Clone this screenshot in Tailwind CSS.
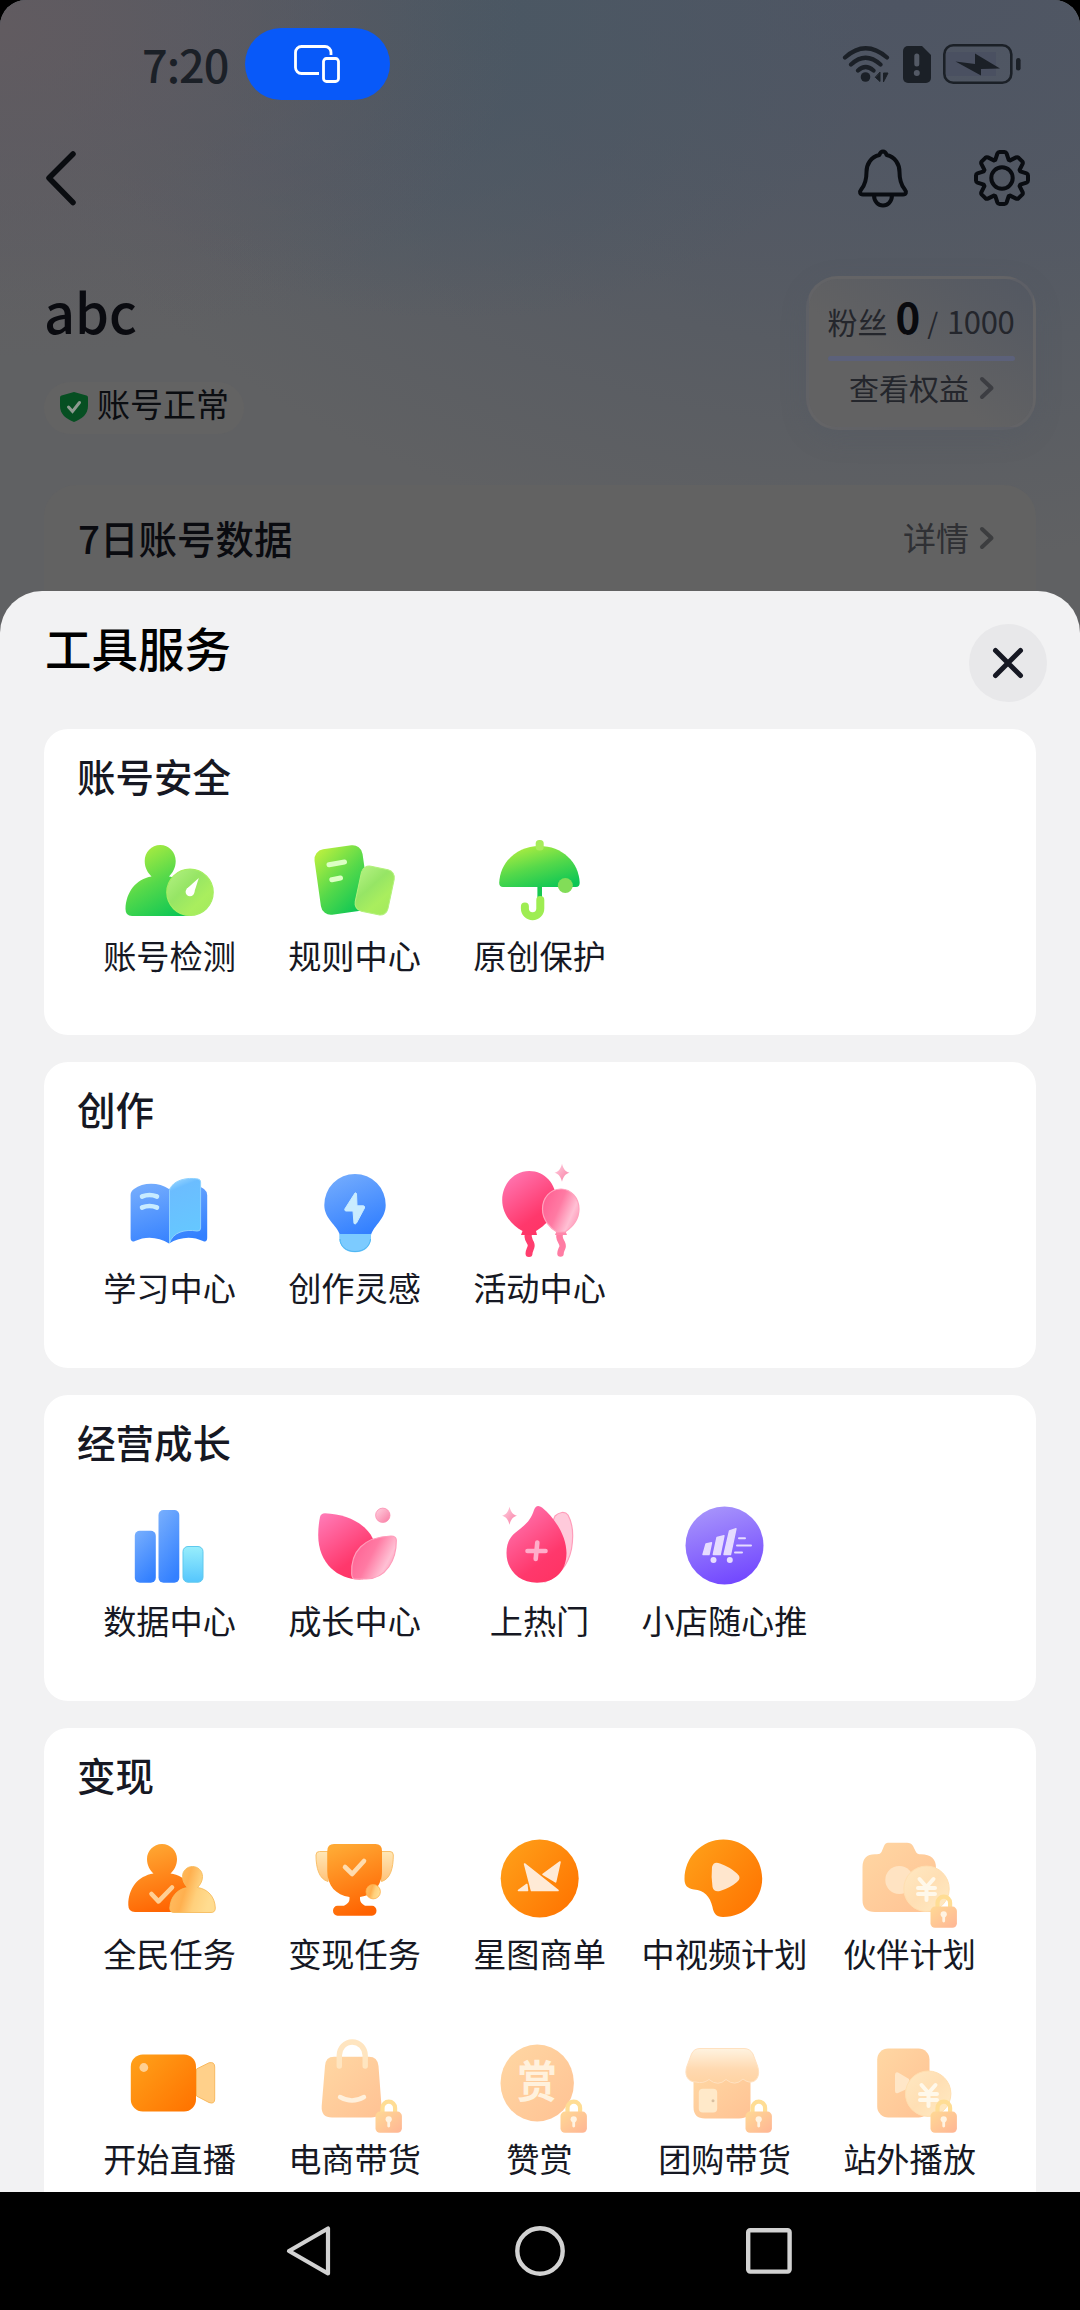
<!DOCTYPE html>
<html lang="zh-CN">
<head>
<meta charset="utf-8">
<title>工具服务</title>
<script src="https://cdn.jsdelivr.net/npm/@tailwindcss/browser@4"></script>
</head>
<body class="bg-black">
<svg class="absolute h-0 w-0" aria-hidden="true">
  <defs>
    <linearGradient id="green" x1="0.2" y1="0" x2="0.75" y2="1"><stop offset="0" stop-color="#b4ee40"/><stop offset="0.5" stop-color="#56d94a"/><stop offset="1" stop-color="#0cc655"/></linearGradient>
    <linearGradient id="lime" x1="0" y1="0" x2="1" y2="1"><stop offset="0" stop-color="#b5f283"/><stop offset="0.4" stop-color="#96e565"/><stop offset="0.7" stop-color="#a9ee5e"/><stop offset="1" stop-color="#a3ea5c"/></linearGradient>
    <linearGradient id="blue" x1="0.2" y1="0" x2="0.6" y2="1"><stop offset="0" stop-color="#74acfd"/><stop offset="1" stop-color="#3380ff"/></linearGradient>
    <linearGradient id="sky" x1="0" y1="0" x2="0.2" y2="1"><stop offset="0" stop-color="#a6dcff"/><stop offset="0.2" stop-color="#6bbdff"/><stop offset="1" stop-color="#65c8ff"/></linearGradient>
    <linearGradient id="aqua" x1="0" y1="0" x2="0" y2="1"><stop offset="0" stop-color="#98eefc"/><stop offset="1" stop-color="#55c6fd"/></linearGradient>
    <linearGradient id="pink" x1="0.1" y1="0" x2="0.7" y2="1"><stop offset="0" stop-color="#ff7ab6"/><stop offset="0.75" stop-color="#ff386c"/><stop offset="1" stop-color="#ff3465"/></linearGradient>
    <linearGradient id="rose" x1="0" y1="0.2" x2="1" y2="0.7"><stop offset="0" stop-color="#ff5f92"/><stop offset="0.45" stop-color="#ff7aa3"/><stop offset="0.8" stop-color="#ffc0d4"/><stop offset="1" stop-color="#ff9cbb"/></linearGradient>
    <linearGradient id="petal" x1="0" y1="0" x2="1" y2="1"><stop offset="0" stop-color="#ffd3e1"/><stop offset="1" stop-color="#f97ba3"/></linearGradient>
    <linearGradient id="violet" x1="0.3" y1="0" x2="0.6" y2="1"><stop offset="0" stop-color="#a794fb"/><stop offset="1" stop-color="#7247ff"/></linearGradient>
    <linearGradient id="orange" x1="0" y1="0.1" x2="1" y2="0.9"><stop offset="0" stop-color="#ffa019"/><stop offset="1" stop-color="#ff7300"/></linearGradient>
    <linearGradient id="flame" x1="0.3" y1="0" x2="0.6" y2="1"><stop offset="0" stop-color="#ffa934"/><stop offset="1" stop-color="#ff6200"/></linearGradient>
    <linearGradient id="amber" x1="0" y1="0" x2="1" y2="0.3"><stop offset="0" stop-color="#ffc26a"/><stop offset="0.45" stop-color="#ffb04f"/><stop offset="0.7" stop-color="#ffd07c"/><stop offset="1" stop-color="#ffdc90"/></linearGradient>
    <linearGradient id="cream" x1="0" y1="0" x2="0" y2="1"><stop offset="0" stop-color="#ffe7b6"/><stop offset="1" stop-color="#ffc27a"/></linearGradient>
    <linearGradient id="peach" x1="0" y1="0" x2="1" y2="1"><stop offset="0" stop-color="#ffd7a3"/><stop offset="1" stop-color="#ffc294"/></linearGradient>
    <linearGradient id="coin" x1="0" y1="0" x2="1" y2="1"><stop offset="0" stop-color="#ffe8c2"/><stop offset="0.5" stop-color="#ffdfb4"/><stop offset="1" stop-color="#ffebc4"/></linearGradient>
    <linearGradient id="awning" x1="0" y1="0" x2="0" y2="1"><stop offset="0" stop-color="#fff3e0"/><stop offset="0.6" stop-color="#ffd9b0"/><stop offset="1" stop-color="#ffd3a3"/></linearGradient>
    <linearGradient id="lockfill" x1="0" y1="0" x2="1" y2="1"><stop offset="0" stop-color="#ffd995"/><stop offset="1" stop-color="#ffb595"/></linearGradient>
    <g id="lock">
      <path d="M78.500 81V75a6.300 6.300 0 0 1 12.600 0V81" fill="none" stroke="#ffdd94" stroke-width="4.200"/>
      <rect x="71.500" y="78.600" width="26.400" height="21.200" rx="4.500" fill="url(#lockfill)"/>
      <circle cx="84.700" cy="86.300" r="3.100" fill="#fff3e2"/>
      <path d="M84.700 87V93" stroke="#fff3e2" stroke-width="2.800" stroke-linecap="round"/>
    </g>
    <path id="yen" d="M-7 -9L0 -1L7 -9M-8.500 0H8.500M-8.500 6H8.500M0 -1V12" fill="none" stroke="#fff8ea" stroke-width="4" stroke-linecap="round" stroke-linejoin="round"/>
    <path id="spark" d="M0 -9C1.500 -3.500 3 -1.500 7.500 0C3 1.500 1.500 3.500 0 9C-1.500 3.500 -3 1.500 -7.500 0C-3 -1.500 -1.500 -3.500 0 -9Z" fill="url(#petal)"/>
  </defs>
</svg>

<main class="flex h-[2310px] w-[1080px] flex-col overflow-hidden rounded-t-[26px] bg-[#626262] font-['Noto_Sans_CJK_SC','Noto_Sans',sans-serif] text-[#161823]">

  <!-- dimmed page behind the sheet -->
  <header class="h-[633px] shrink-0 bg-[radial-gradient(ellipse_520px_330px_at_0px_30px,#615b60_0%,#615b6000_100%),radial-gradient(ellipse_420px_300px_at_460px_20px,#4a5763_0%,#4a576300_100%),radial-gradient(ellipse_900px_560px_at_900px_0px,#4e5563_0%,#50576399_55%,#50576300_100%),linear-gradient(180deg,#545a64_0%,#606163_50%,#606163_100%)]">
    <div class="flex h-[128px] items-center pl-[142px] pr-[58px]">
      <span class="-mt-[2px] w-[103px] text-[45px] font-medium leading-none tracking-[-1px] text-[#1b2027]">7:20</span>
      <div class="flex h-[72px] w-[145px] items-center justify-center rounded-full bg-[#0859f9]">
        <svg class="h-[40px] w-[48px] -translate-x-px -translate-y-px" viewBox="0 0 48 40" fill="none" stroke="#fff" stroke-width="2.800"><path d="M26 30.500H8.500a6 6 0 0 1-6-6V9.500a6 6 0 0 1 6-6H32a6 6 0 0 1 6 6V12"/><rect x="30.500" y="15.500" width="15" height="23" rx="3"/></svg>
      </div>
      <div class="ml-auto flex items-center">
        <svg class="h-[40px] w-[48px]" viewBox="0 0 48 40" fill="none" stroke="#1b2027" stroke-width="4.200" stroke-linecap="round"><path d="M3 13.500Q23.500-5 45 13.500M9 20.500Q23.500 7 38.500 20.500M16 26.500Q23.500 19.500 31.500 26.500"/><circle cx="23.500" cy="33" r="4.800" fill="#1b2027" stroke="none"/><path d="M38 28.500V37.500L33.500 33.500ZM41.500 37.500V29H46L42.500 36Z" fill="#1b2027" stroke="#1b2027" stroke-width="1"/></svg>
        <svg class="ml-[13px] h-[37px] w-[28px]" viewBox="0 0 28 37"><path d="M5 0H19L28 9V32a5 5 0 0 1-5 5H5a5 5 0 0 1-5-5V5a5 5 0 0 1 5-5Z" fill="#1b2027"/><path d="M13.800 10V18" stroke="#545a66" stroke-width="5" stroke-linecap="round"/><circle cx="13.800" cy="27" r="3" fill="#545a66"/></svg>
        <svg class="ml-[12px] h-[40px] w-[79px]" viewBox="0 0 79 40"><path d="M3 8h50v24H3z" fill="#4a5061"/><rect x="1.300" y="1.300" width="67" height="37.400" rx="9" fill="none" stroke="#1b2027" stroke-width="2.600"/><path d="M12.500 17.500L32 20V9.500L57 24.500L38 25V31.500Z" fill="#1b2027"/><rect x="73" y="14" width="4.600" height="12.500" rx="2.300" fill="#1b2027"/></svg>
      </div>
    </div>

    <div class="flex h-[100px] items-center pl-[44px] pr-[48px]">
      <svg class="h-[58px] w-[36px]" viewBox="0 0 36 58" fill="none" stroke="#0a0c10" stroke-width="5.500" stroke-linecap="round" stroke-linejoin="round"><path d="M29 5L5 29L29 53.500"/></svg>
      <svg class="ml-auto h-[60px] w-[52px]" viewBox="0 0 52 60" fill="none" stroke="#090c11" stroke-width="4" stroke-linecap="round" stroke-linejoin="round"><path d="M26 3.500C24 3.500 23 5 22.300 7C14 9 9.500 16 9.500 24C9.500 32 8.500 36 4.500 41C2 44 3 46.500 6 46.500H46C49 46.500 50 44 47.500 41C43.500 36 42.500 32 42.500 24C42.500 16 38 9 29.700 7C29 5 28 3.500 26 3.500ZM17 47C17 61 35 61 35 47"/></svg>
      <svg class="ml-[63px] h-[60px] w-[60px]" viewBox="-30 -30 60 60" fill="none" stroke="#090c11" stroke-width="4" stroke-linejoin="round"><circle r="10.700"/><path d="M-6.700-18.200L-4.600-24.500Q-4-26-2.500-26H2.500Q4-26 4.600-24.500L6.700-18.200L8.100-17.600L14.100-20.600Q15.500-21.200 16.600-20.200L20.200-16.600Q21.200-15.500 20.600-14.100L17.600-8.100L18.200-6.700L24.500-4.600Q26-4 26-2.500V2.500Q26 4 24.500 4.600L18.200 6.700L17.600 8.100L20.600 14.100Q21.200 15.500 20.200 16.600L16.600 20.200Q15.500 21.200 14.100 20.600L8.100 17.600L6.700 18.200L4.600 24.500Q4 26 2.500 26H-2.500Q-4 26-4.600 24.500L-6.700 18.200L-8.100 17.600L-14.100 20.600Q-15.500 21.200-16.600 20.200L-20.200 16.600Q-21.200 15.500-20.600 14.100L-17.600 8.100L-18.200 6.700L-24.500 4.600Q-26 4-26 2.500V-2.500Q-26-4-24.500-4.600L-18.200-6.700L-17.600-8.100L-20.600-14.100Q-21.200-15.500-20.200-16.600L-16.600-20.200Q-15.500-21.200-14.100-20.600L-8.100-17.600Z"/></svg>
    </div>

    <div class="flex justify-between px-[44px] pt-[48px]">
      <div class="flex flex-col items-start">
        <div class="h-[80px] text-[54px] font-medium leading-[70px] text-[#0a0b10]">abc</div>
        <div class="mt-[26px] flex h-[52px] items-center gap-[8px] rounded-full bg-[#636363] pl-[15px] pr-[15px]">
          <svg class="-mt-[3px] h-[32px] w-[30px]" viewBox="0 0 30 32"><path d="M15 1L27.500 4.500Q29 5 29 6.500V15C29 23 23 28 15 31C7 28 1 23 1 15V6.500Q1 5 2.500 4.500Z" fill="#064f22"/><path d="M9.500 16L13.500 20.500L20.500 11.500" fill="none" stroke="#8d9a90" stroke-width="3" stroke-linecap="round"/></svg>
          <span class="-mt-[11px] text-[33px] leading-[48px] text-[#0b0d11]">账号正常</span>
        </div>
      </div>
      <div class="flex h-[154px] w-[230px] flex-col items-center rounded-[32px] border-[3px] border-[#66666980] bg-linear-to-bl from-[#535862] to-[#626263] to-60% pt-[14px] shadow-[0_8px_24px_#50576340]">
        <div class="flex h-[46px] w-[187px] items-baseline whitespace-nowrap text-[30px] leading-[46px] text-[#24262c]"><span>粉丝</span><span class="ml-[8px] text-[42px] font-bold text-[#090a0e]">0</span><span class="ml-[7px] text-[28px]">/</span><span class="ml-auto text-[31px] tracking-[-0.3px]">1000</span></div>
        <div class="mt-[17px] h-[5px] w-[187px] shrink-0 rounded-full bg-[#5c617a]"></div>
        <div class="mt-[4px] flex items-center gap-[10px] pl-[2px] text-[30px] leading-[44px] text-[#24262c]">查看权益
          <svg class="mt-[2px] h-[26px] w-[16px]" viewBox="0 0 16 26" fill="none" stroke="#3c3d42" stroke-width="4" stroke-linecap="round" stroke-linejoin="round"><path d="M3 4L12.500 13L3 22"/></svg>
        </div>
      </div>
    </div>

    <div class="mx-[44px] mt-[51px] flex h-[148px] items-start justify-between rounded-t-[32px] bg-[#626262] pl-[34px] pr-[41px] pt-[24px]">
      <span class="text-[38.5px] font-medium leading-[56px] text-[#0a0b10]">7日账号数据</span>
      <span class="flex items-center gap-[10px] text-[33px] leading-[56px] text-[#2f3034]">详情
        <svg class="mt-[2px] h-[26px] w-[16px]" viewBox="0 0 16 26" fill="none" stroke="#3c3d3f" stroke-width="4" stroke-linecap="round" stroke-linejoin="round"><path d="M3 4L12.500 13L3 22"/></svg>
      </span>
    </div>
  </header>

  <!-- bottom sheet -->
  <section class="z-10 -mt-[42px] h-[1601px] shrink-0 overflow-hidden rounded-t-[42px] bg-[#f2f2f3] px-[44px]">
    <div class="-mr-[11px] flex h-[138px] items-start justify-between">
      <h1 class="mt-[26px] pl-[1px] text-[46.5px] font-medium leading-[60px] text-black">工具服务</h1>
      <button class="mt-[33px] flex h-[78px] w-[78px] items-center justify-center rounded-full bg-[#e8e8ea]">
        <svg class="h-[34px] w-[34px]" viewBox="0 0 34 34" stroke="#161823" stroke-width="5" stroke-linecap="round"><path d="M4.500 4.500L29.500 29.500M29.500 4.500L4.500 29.500"/></svg>
      </button>
    </div>

    <div class="flex flex-col gap-[27px]">
      <article class="h-[306px] rounded-[24px] bg-white px-[33px] pt-[18px]">
        <h2 class="text-[38.5px] font-medium leading-[56px]">账号安全</h2>
        <div class="mt-[26px] grid grid-cols-[repeat(5,185px)] text-[33.2px] leading-[40px] [&_svg]:-translate-x-px">
          <div class="flex flex-col items-center gap-[6px]">
            <svg class="h-[100px] w-[100px]" viewBox="0 0 100 100"><path d="M41.200 16C50 16 56.700 23 56.700 32C56.700 39 53.500 44 50 47.500C66 50 76 64 76 80Q76 87 69 87H13Q6.500 87 6.500 80C7 63 17 50 32.500 47.500C29 44 25.700 39 25.700 32C25.700 23 32.500 16 41.200 16Z" fill="url(#green)"/><circle cx="71" cy="63.300" r="23.200" fill="url(#lime)" stroke="#a6ee62" stroke-width="1.200"/><path d="M67.500 60L79.800 49L75 64Z" fill="#fff"/><circle cx="71" cy="62.800" r="4.400" fill="#fff"/></svg>
            <span>账号检测</span>
          </div>
          <div class="flex flex-col items-center gap-[6px]">
            <svg class="h-[100px] w-[100px]" viewBox="0 0 100 100"><rect x="13.500" y="18" width="48.500" height="66" rx="10" fill="url(#green)" transform="rotate(-8 38 51)"/><path d="M25 35.800L40.500 33M27.800 50.700L36.500 49" stroke="#dcffc4" stroke-width="5" stroke-linecap="round"/><rect x="54" y="38.500" width="33.500" height="46" rx="8" fill="url(#lime)" stroke="#b3f17c" stroke-width="1" transform="rotate(12 70.600 61.300)"/></svg>
            <span>规则中心</span>
          </div>
          <div class="flex flex-col items-center gap-[6px]">
            <svg class="h-[100px] w-[100px]" viewBox="0 0 100 100"><path d="M50.700 56V70" stroke="#17c850" stroke-width="4.600"/><path d="M51.300 71V79.500A7.700 7.700 0 0 1 35.900 79.500V77.500" fill="none" stroke="#9eed52" stroke-width="8" stroke-linecap="round"/><path d="M10.200 54C11 33 28 17 50.500 17C73 17 90 33 90.700 54Q90.500 58 87 58H14Q10.300 58 10.200 54Z" fill="url(#green)"/><rect x="46.700" y="11" width="8" height="10.500" rx="3.500" fill="#a7ec5a"/><circle cx="76.300" cy="56.500" r="7.500" fill="#82dd58"/></svg>
            <span>原创保护</span>
          </div>
        </div>
      </article>

      <article class="h-[306px] rounded-[24px] bg-white px-[33px] pt-[18px]">
        <h2 class="text-[38.5px] font-medium leading-[56px]">创作</h2>
        <div class="mt-[26px] grid grid-cols-[repeat(5,185px)] text-[33.2px] leading-[40px] [&_svg]:-translate-x-px">
          <div class="flex flex-col items-center gap-[5px]">
            <svg class="h-[100px] w-[100px]" viewBox="0 0 100 100"><path d="M50 27C40 20 24 20 15 27Q11.600 29.500 11.600 33V76C11.600 79 13.500 80.500 16 79C27 73.500 40 75 50 81.500C60 75 73 73.500 84 79C86.500 80.500 88.200 79 88.200 76V33Q88.200 29.500 85 27C76 20 60 20 50 27Z" fill="url(#blue)"/><path d="M50.500 81V28C54 18 68 15 79 17Q81.600 17.500 81.600 20V66Q81.600 69.500 78 69C66 67 54 70 50.500 81Z" fill="url(#sky)" stroke="#8fd2ff" stroke-width="1"/><path d="M23 34.500Q30.500 31.500 38 34.500M23 45.500Q30.500 42.500 38 45.500" fill="none" stroke="#c7ebff" stroke-width="4.600" stroke-linecap="round"/></svg>
            <span>学习中心</span>
          </div>
          <div class="flex flex-col items-center gap-[5px]">
            <svg class="h-[100px] w-[100px]" viewBox="0 0 100 100"><path d="M51 12A30.700 30.700 0 0 1 81.700 43C81.700 57 70 63 67 73H36C33 63 20.300 57 20.300 43A30.700 30.700 0 0 1 51 12Z" fill="url(#blue)"/><path d="M35.300 72H67V76C67 84 61 90.300 51 90.300C41 90.300 35.300 84 35.300 76Z" fill="#7ccbff"/><path d="M36 77C36 84 42 89.500 51 89.500C60 89.500 66 84 66.500 77" fill="none" stroke="#4eb6f2" stroke-width="1"/><path d="M51 31L40.800 47Q40.500 49 42 49H49L50 61.500Q51.500 62.500 52.500 61L60.500 46Q61 44 59.500 43.800H53L52.500 31.500Q51.800 30.500 51 31Z" fill="#c9ecff" stroke="#c9ecff" stroke-width="1"/></svg>
            <span>创作灵感</span>
          </div>
          <div class="flex flex-col items-center gap-[5px]">
            <svg class="h-[100px] w-[100px]" viewBox="0 0 100 100"><path d="M40 70C36 78 44 80 42 85C41 88 40 89 40 91.500" fill="none" stroke="#ff3d6e" stroke-width="7" stroke-linecap="round"/><path d="M40.200 9C56 9 67.200 22 67.200 38C67.200 53 56 64 47 69L48 73H32L33.500 69C24 64 13.200 53 13.200 38C13.200 22 25 9 40.200 9Z" fill="url(#pink)"/><path d="M71.500 70C67.500 78 75 80 73.500 85C72.500 88 71.500 89 71.500 91.500" fill="none" stroke="#ff7ca3" stroke-width="6.500" stroke-linecap="round"/><path d="M66 73L68 68H76L78 73Z" fill="#ff86aa"/><path d="M72 27C82 27 90 36 90 47C90 58 82 66 76 70H68C61 66 53.500 58 53.500 47C53.500 36 61 27 72 27Z" fill="url(#rose)" stroke="#ffa3be" stroke-width="1.200"/><use href="#spark" x="73" y="10.700"/></svg>
            <span>活动中心</span>
          </div>
        </div>
      </article>

      <article class="h-[306px] rounded-[24px] bg-white px-[33px] pt-[18px]">
        <h2 class="text-[38.5px] font-medium leading-[56px]">经营成长</h2>
        <div class="mt-[26px] grid grid-cols-[repeat(5,185px)] text-[33.2px] leading-[40px] [&_svg]:-translate-x-px">
          <div class="flex flex-col items-center gap-[5px]">
            <svg class="h-[100px] w-[100px]" viewBox="0 0 100 100"><rect x="15.800" y="35.700" width="21" height="52" rx="5" fill="url(#blue)"/><rect x="39.500" y="15" width="20.800" height="72.700" rx="5" fill="url(#blue)"/><rect x="64" y="51.500" width="20" height="35.700" rx="5" fill="url(#aqua)" stroke="#5fc9ee" stroke-width="1"/></svg>
            <span>数据中心</span>
          </div>
          <div class="flex flex-col items-center gap-[5px]">
            <svg class="h-[100px] w-[100px]" viewBox="0 0 100 100"><path d="M21 18.300C44 19 63 30 69 44C73 60 66 78 59 84.300C36 86 14.200 70 14.200 40C14.200 33 15 27 16 22Q17 18.300 21 18.300Z" fill="url(#pink)"/><path d="M87 41Q92 41 92.300 45C92.500 65 82 84 62 84H51Q48 84 47.700 79C46.500 56 60 42 87 41Z" fill="url(#rose)" stroke="#ff9dbb" stroke-width="1.200"/><circle cx="78.800" cy="20.300" r="7.200" fill="url(#petal)" stroke="#fb8fb1" stroke-width="0.800"/></svg>
            <span>成长中心</span>
          </div>
          <div class="flex flex-col items-center gap-[5px]">
            <svg class="h-[100px] w-[100px]" viewBox="0 0 100 100"><path d="M66 21C70 17 76 16 79 20C84 29 84.500 42 82.500 54C79 71 70 81 56 87L50 60Z" fill="#ffcadb" stroke="#ff9dba" stroke-width="1.200"/><path d="M49.200 11Q51 11 53 12.500C67 24 77.500 42 77.500 58C77.500 77 65 87.700 48 87.700C30 87.700 17.500 75 17.500 58C17.500 33 38 38 45 15Q46.500 11 49.200 11Z" fill="url(#pink)"/><path d="M38.500 56H56.500M48.300 47.500L46.700 64" stroke="#ffadca" stroke-width="4.600" stroke-linecap="round"/><use href="#spark" x="20.500" y="20.700"/></svg>
            <span>上热门</span>
          </div>
          <div class="flex flex-col items-center gap-[5px]">
            <svg class="h-[100px] w-[100px]" viewBox="0 0 100 100"><circle cx="50.500" cy="50.500" r="39" fill="url(#violet)"/><g fill="#e6dcff" stroke="#e6dcff" stroke-width="1.400" stroke-linejoin="round"><path d="M32 49L37.500 47.800L35 59.500L29 59.500Z"/><path d="M43 42.500L50 40.700L46.200 59.500L39.300 59.500Z"/><path d="M55.500 36L62 33.700L56.500 59.500L50 59.500Z"/><path d="M65 43.200H71M63 50.400H77M61 57.400H68" stroke-width="2" stroke-linecap="round"/></g><circle cx="39.500" cy="65" r="3" fill="#e6dcff"/><circle cx="55.800" cy="65" r="3" fill="#e6dcff"/></svg>
            <span class="whitespace-nowrap">小店随心推</span>
          </div>
        </div>
      </article>

      <article class="h-[500px] rounded-t-[24px] bg-white px-[33px] pt-[18px]">
        <h2 class="text-[38.5px] font-medium leading-[56px]">变现</h2>
        <div class="mt-[26px] grid auto-rows-[205px] grid-cols-[repeat(5,185px)] text-[33.2px] leading-[40px] [&_svg]:-translate-x-px">
          <div class="flex flex-col items-center gap-[5px]">
            <svg class="h-[100px] w-[100px]" viewBox="0 0 100 100"><path d="M43 16C51.500 16 58 23 58 31C58 37 55 42.500 51.500 45.500C67 48 77 60 77 76Q77 84 70 84H16Q9.300 84 9.300 77C9.300 60 19 48 34.500 45.500C31 42.500 28 37 28 31C28 23 34.500 16 43 16Z" fill="url(#flame)"/><path d="M32.500 66L39.500 73.300L53 59.500" fill="none" stroke="#ffcf94" stroke-width="4.600" stroke-linecap="round" stroke-linejoin="round"/><path d="M73.500 38.500C79 38.500 83.500 43 83.500 48.500C83.500 53 81.500 56.500 78.500 59.500C89 61 96 69 96.300 80Q96.300 84.500 92 84.500H55Q50.800 84.500 50.800 80C51.500 69 58 61 68.500 59.500C65.500 56.500 63.500 53 63.500 48.500C63.500 43 68 38.500 73.500 38.500Z" fill="url(#amber)" stroke="#f6bb5c" stroke-width="0.900"/></svg>
            <span>全民任务</span>
          </div>
          <div class="flex flex-col items-center gap-[5px]">
            <svg class="h-[100px] w-[100px]" viewBox="0 0 100 100"><path d="M24 53.500C15 51 12 40 12 27Q12 23.500 15.500 23.500H24ZM77.500 53.500C86.500 51 89.300 40 89.300 27Q89.300 23.500 86 23.500H77.500Z" fill="url(#cream)" stroke="#f9c06a" stroke-width="1"/><path d="M30 16H71.500Q78 16 78 23V43C78 58 69 67 56 69V71Q56 75 61 77.700H68A4.500 5 0 0 1 68 87.700H33.500A4.500 5 0 0 1 33.500 77.700H40Q45.500 75 45.500 71V69C32 67 23.300 58 23.300 43V23Q23.300 16 30 16Z" fill="url(#flame)"/><path d="M41 39L48.200 46L60 33" fill="none" stroke="#ffdcae" stroke-width="4.600" stroke-linecap="round" stroke-linejoin="round"/><circle cx="69.200" cy="63.700" r="7.200" fill="url(#amber)" stroke="#ffb14c" stroke-width="0.800"/></svg>
            <span>变现任务</span>
          </div>
          <div class="flex flex-col items-center gap-[5px]">
            <svg class="h-[100px] w-[100px]" viewBox="0 0 100 100"><circle cx="50.700" cy="50.500" r="39" fill="url(#orange)"/><path d="M35.600 36L69 62.500H42.500ZM71 34L54 46.300L66.600 53.800ZM29.500 62.500L37.800 56.500L38.500 62.500Z" fill="#ffead6" stroke="#ffead6" stroke-width="1.600" stroke-linejoin="round"/></svg>
            <span>星图商单</span>
          </div>
          <div class="flex flex-col items-center gap-[5px]">
            <svg class="h-[100px] w-[100px]" viewBox="0 0 100 100"><path d="M10.500 51C10.500 29 28 11.500 49.300 11.500C71 11.500 88.200 29 88.200 50.500C88.200 72 71 89 49 89C42 89 39.500 85 38.500 79C36 68 30 62.500 20 61.500C13 60.500 10.500 57 10.500 51Z" fill="url(#orange)"/><path d="M38 39Q39.500 33 46 35.500Q56 39 63 45.500Q68 50 63 54Q56 60 46 63Q40 64.500 38.500 59Q37 49 38 39Z" fill="#ffe6cd"/></svg>
            <span class="whitespace-nowrap">中视频计划</span>
          </div>
          <div class="flex flex-col items-center gap-[5px]">
            <svg class="h-[100px] w-[100px]" viewBox="0 0 100 100"><path d="M29 14.700H48Q52 14.700 54 18L57 24Q58 26.300 62 26.300C72 26.300 77 31 77 40V84H16Q3.500 84 3.500 72V39Q3.500 26.300 16 26.300H18Q21.500 26.300 22.500 24L25 18Q26.500 14.700 29 14.700Z" fill="url(#peach)"/><circle cx="40.300" cy="52" r="14" fill="#ffe3c2"/><circle cx="67.500" cy="60.800" r="22.700" fill="url(#coin)" stroke="#ffdfb0" stroke-width="1"/><use href="#yen" x="67.500" y="60"/><use href="#lock"/></svg>
            <span>伙伴计划</span>
          </div>

          <div class="flex flex-col items-center gap-[5px]">
            <svg class="h-[100px] w-[100px]" viewBox="0 0 100 100"><path d="M77.500 36L90 29.800Q95.700 28.500 95.700 34V66Q95.700 71.500 90 69.500L77.500 63Z" fill="#ffd08a" stroke="#f8b95f" stroke-width="1"/><rect x="11.800" y="21.500" width="65.200" height="57" rx="12" fill="url(#orange)"/><circle cx="24.800" cy="34.500" r="4.400" fill="#ffcf91"/></svg>
            <span>开始直播</span>
          </div>
          <div class="flex flex-col items-center gap-[5px]">
            <svg class="h-[100px] w-[100px]" viewBox="0 0 100 100"><path d="M30 23.800H65Q73.500 23.800 74.500 33L77.500 73Q78 84.500 67 84.500H28Q17 84.500 17.700 73L21 33Q21.500 23.800 30 23.800Z" fill="url(#peach)"/><path d="M35.300 33V22.500A12.900 13.500 0 0 1 61.200 22.500V33" fill="none" stroke="#ffe5c0" stroke-width="5.400" stroke-linecap="round"/><path d="M36 64Q48 71 60 64" fill="none" stroke="#fff0dc" stroke-width="4.400" stroke-linecap="round"/><use href="#lock"/></svg>
            <span>电商带货</span>
          </div>
          <div class="flex flex-col items-center gap-[5px]">
            <svg class="h-[100px] w-[100px]" viewBox="0 0 100 100"><ellipse cx="48.200" cy="50" rx="36.700" ry="38.500" fill="url(#peach)"/><text x="0" y="0" transform="translate(48 65) scale(0.900 1)" text-anchor="middle" font-size="44" font-weight="700" fill="#fff1dd">赏</text><use href="#lock"/></svg>
            <span>赞赏</span>
          </div>
          <div class="flex flex-col items-center gap-[5px]">
            <svg class="h-[100px] w-[100px]" viewBox="0 0 100 100"><path d="M19.500 42H76.500V74Q76.500 85.500 65 85.500H31Q19.500 85.500 19.500 74Z" fill="url(#peach)"/><path d="M26 15.500H70Q76 15.500 79 21L83.500 33C87 43 82 50 75 49Q72 48.500 69 46Q61 54 52 46.500Q44 54 35 46.500Q29 51 22 49C13 49 10 41 13 33L17.500 21Q20 15.500 26 15.500Z" fill="url(#awning)" stroke="#ffe1c0" stroke-width="1"/><rect x="24.800" y="55.800" width="18.400" height="23.700" rx="4" fill="#ffe9c9"/><circle cx="39" cy="67.800" r="1.500" fill="#d9bfa0"/><use href="#lock"/></svg>
            <span>团购带货</span>
          </div>
          <div class="flex flex-col items-center gap-[5px]">
            <svg class="h-[100px] w-[100px]" viewBox="0 0 100 100"><rect x="18.200" y="15.500" width="52.300" height="69" rx="11" fill="url(#peach)"/><path d="M36 42Q36 38.500 39 39.500L50 46V55L39 60Q36 61 36 58Z" fill="#ffe6c7"/><circle cx="69.200" cy="60.700" r="22.700" fill="url(#coin)" stroke="#ffdfb0" stroke-width="1"/><use href="#yen" x="69.500" y="61"/><use href="#lock"/></svg>
            <span>站外播放</span>
          </div>
        </div>
      </article>
    </div>
  </section>

  <!-- system navigation -->
  <nav class="flex h-[118px] shrink-0 items-center bg-black pl-[284px]">
    <svg class="h-[54px] w-[48px]" viewBox="0 0 48 54" fill="none" stroke="#d2d2d2" stroke-width="4.200" stroke-linejoin="round"><path d="M5 27L44 4.500V49.500Z"/></svg>
    <svg class="ml-[181px] h-[54px] w-[54px]" viewBox="0 0 54 54" fill="none" stroke="#d2d2d2" stroke-width="4.400"><circle cx="27" cy="27" r="22.700"/></svg>
    <svg class="ml-[175px] h-[54px] w-[54px]" viewBox="0 0 54 54" fill="none" stroke="#d2d2d2" stroke-width="4.400"><rect x="6.200" y="6.200" width="41.400" height="41.400" rx="2"/></svg>
  </nav>
</main>
</body>
</html>
